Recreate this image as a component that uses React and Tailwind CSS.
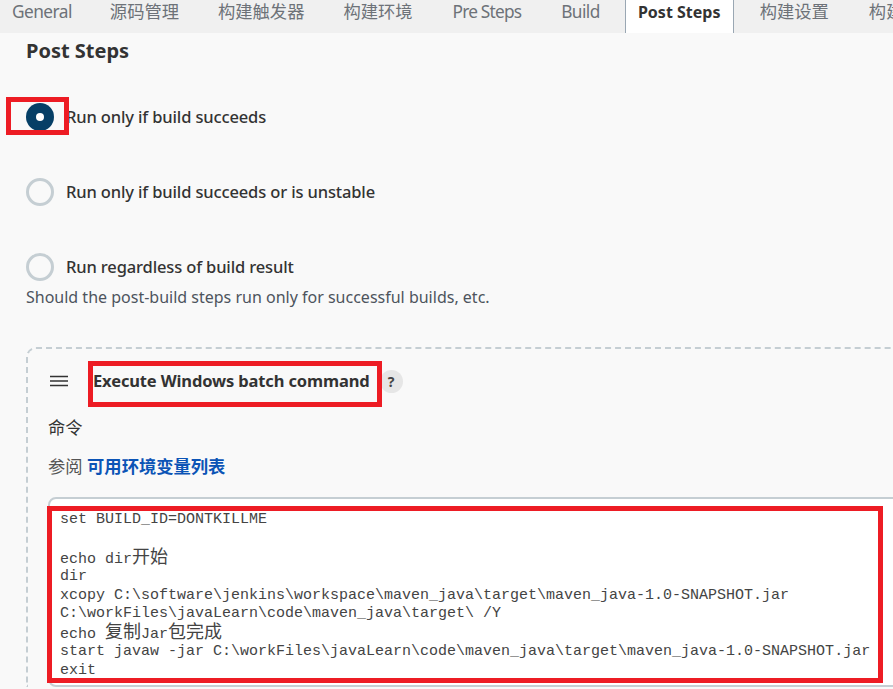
import React from 'react';

const sans = '"Noto Sans", "Noto Sans CJK SC", sans-serif';

const tabs = [
	{ label: 'General', pad: 'pl-3 pr-[38px] tracking-[-0.55px]' },
	{ label: '源码管理', pad: 'pr-[39px]' },
	{ label: '构建触发器', pad: 'pr-[39px]' },
	{ label: '构建环境', pad: 'pr-[40px]' },
	{ label: 'Pre Steps', pad: 'pr-[40px] tracking-[-0.8px]' },
	{ label: 'Build', pad: 'pr-[25px] tracking-[-0.6px]' },
	{ label: 'Post Steps', active: true },
	{ label: '构建设置', pad: 'pl-[26px] pr-[40px]' },
	{ label: '构建后操作', pad: '' },
];

function Tab({ label, pad, active }) {
	if (active) {
		return (
			<div className="flex h-[33px] w-[109px] shrink-0 items-center justify-center border-x border-[#9aa7b3] bg-white pb-[10px] text-[16px] font-bold text-[#333]">
				{label}
			</div>
		);
	}
	return <div className={`flex h-[33px] shrink-0 items-center pb-[10px] whitespace-nowrap text-[17.3px] text-[#6d7278] ${pad}`}>{label}</div>;
}

function Radio({ checked, label, className }) {
	return (
		<div className={`flex items-center gap-[12px] ${className}`}>
			{checked ? (
				<span className="flex h-[28px] w-[28px] shrink-0 items-center justify-center rounded-full bg-[#063f66]">
					<span className="h-[8px] w-[8px] rounded-full bg-white" />
				</span>
			) : (
				<span className="h-[28px] w-[28px] shrink-0 rounded-full border-[3px] border-[#c5ced3]" />
			)}
			<span className="text-[16.5px] font-medium tracking-[-0.14px] whitespace-nowrap text-[#333]">{label}</span>
		</div>
	);
}

function Cjk({ children }) {
	return <span className="text-[18px] leading-[12px]" style={{ fontFamily: '"Noto Sans CJK SC", serif' }}>{children}</span>;
}

function Line({ children }) {
	return <div className="h-[18.875px]">{children}</div>;
}

export default function App() {
	return (
		<div className="relative h-[689px] w-[893px] overflow-hidden bg-[#f9f9f9]" style={{ fontFamily: sans }}>
			<div className="flex h-[33px] overflow-hidden bg-[#f0f0f0]">
				{tabs.map((t) => (
					<Tab key={t.label} {...t} />
				))}
			</div>

			<div className="pl-[26px]">
				<h2 className="h-[36px] text-[20px] leading-[36px] font-bold text-[#333]">Post Steps</h2>
				<Radio checked label="Run only if build succeeds" className="mt-[34px]" />
				<Radio label="Run only if build succeeds or is unstable" className="mt-[47px]" />
				<Radio label="Run regardless of build result" className="mt-[47px]" />
				<p className="mt-[4px] text-[16px] leading-[24px] whitespace-nowrap text-[#4d545d]">
					Should the post-build steps run only for successful builds, etc.
				</p>

				<div className="mt-[38px] w-[900px] rounded-t-[10px] border-2 border-b-0 border-dashed border-[#c5ced3] pl-[20px]">
					<div className="mt-[19px] flex h-[26px] items-center">
						<svg width="20" height="14" viewBox="0 0 20 14" className="ml-[1px] shrink-0" fill="none" stroke="#333" strokeWidth="1.4">
							<path d="M1 2.5h18M1 7h18M1 11.5h18" />
						</svg>
						<span className="ml-[24px] text-[16.5px] font-bold tracking-[-0.14px] whitespace-nowrap text-[#333]">Execute Windows batch command</span>
						<span className="ml-[10px] flex h-[23px] w-[23px] items-center justify-center rounded-full bg-[#e6e6e6] text-[14px] font-bold text-[#444]">?</span>
					</div>
					<div className="mt-[22px] text-[17.3px] leading-[24px] text-[#333]">命令</div>
					<div className="mt-[15px] text-[17.3px] leading-[24px] text-[#555]">
						参阅 <a className="font-bold text-[#0b54b6]">可用环境变量列表</a>
					</div>
					<div
						className="mt-[18px] h-[190px] rounded-[8px] border-2 border-[#c5ced3] bg-white pt-[12px] pl-[10px] text-[15px] leading-[18.875px] whitespace-pre text-[#444]"
						style={{ fontFamily: '"Liberation Mono", monospace' }}
					>
						<Line>set BUILD_ID=DONTKILLME</Line>
						<Line>&nbsp;</Line>
						<Line>echo dir<Cjk>开始</Cjk></Line>
						<Line>dir</Line>
						<Line>{'xcopy C:\\software\\jenkins\\workspace\\maven_java\\target\\maven_java-1.0-SNAPSHOT.jar'}</Line>
						<Line>{'C:\\workFiles\\javaLearn\\code\\maven_java\\target\\ /Y'}</Line>
						<Line>echo <Cjk>复制</Cjk>Jar<Cjk>包完成</Cjk></Line>
						<Line>{'start javaw -jar C:\\workFiles\\javaLearn\\code\\maven_java\\target\\maven_java-1.0-SNAPSHOT.jar'}</Line>
						<Line>exit</Line>
					</div>
				</div>
			</div>

			{/* red annotation boxes */}
			<div className="absolute top-[97px] left-[6px] h-[38px] w-[63px] border-[5px] border-[#ed1c24]" />
			<div className="absolute top-[361px] left-[88px] h-[46px] w-[294px] border-[5px] border-[#ed1c24]" />
			<div className="absolute top-[506px] left-[47px] h-[177px] w-[836px] border-[5px] border-[#ed1c24]" />
		</div>
	);
}
